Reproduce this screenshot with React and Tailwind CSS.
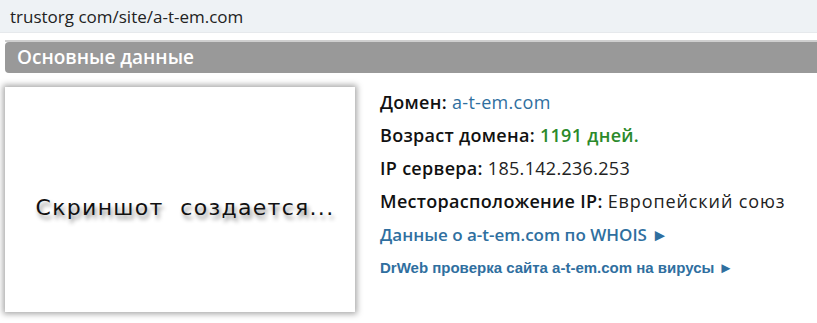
export default function App() {
  const rows = [
    { label: "Домен:", value: "a-t-em.com", cls: "text-[#2f6f9f] font-normal" },
    { label: "Возраст домена:", value: "1191 дней.", cls: "text-[#2b8a2b] font-semibold" },
    { label: "IP сервера:", value: "185.142.236.253", cls: "text-[#222] font-normal" },
    { label: "Месторасположение IP:", value: "Европейский союз", cls: "text-[#222] font-normal tracking-[0.9px]" },
  ];

  return (
    <div className="w-[817px] h-[323px] overflow-hidden bg-white font-['Open_Sans',sans-serif]">
      {/* адресная строка */}
      <div className="h-[33px] bg-[#eef2f5] border-b border-[#e6e9ec] pl-[10px] flex items-center">
        <span className="text-[17px] text-[#222] leading-none">trustorg com/site/a-t-em.com</span>
      </div>

      {/* заголовок блока */}
      <div className="mt-[7px] ml-[5px] border-t-2 border-[#cfcfcf]">
        <div className="h-[31px] bg-[#999999] rounded-l-[4px] pl-[12px] flex items-center">
          <h2 className="text-white font-semibold text-[19px] leading-none">Основные данные</h2>
        </div>
      </div>

      <div className="flex mt-[14px] ml-[5px]">
        {/* скриншот */}
        <div className="w-[350px] h-[225px] bg-white shadow-[0_0_6px_2px_rgba(0,0,0,0.35)] flex items-center justify-center">
          <span className="font-['DejaVu_Sans',sans-serif] text-[22px] text-[#111] tracking-[1.3px] [text-shadow:2px_4px_4px_rgba(0,0,0,0.45)] mt-[16px] ml-[10px]">
            Скриншот&nbsp;&nbsp;создается...
          </span>
        </div>

        {/* данные */}
        <div className="ml-[25px] -mt-[2px] flex flex-col">
          {rows.map((r) => (
            <div key={r.label} className="h-[33px] flex items-center text-[18px] tracking-[0.3px] leading-none">
              <span className="font-semibold text-[#111]">{r.label}</span>
              <span className={"ml-[5px] " + r.cls}>{r.value}</span>
            </div>
          ))}
          <a className="mt-[3px] h-[30px] flex items-center text-[17px] font-semibold text-[#2f6f9f]">
            Данные о a-t-em.com по WHOIS ►
          </a>
          <a className="mt-[3px] h-[30px] flex items-center font-['Liberation_Sans',sans-serif] font-bold text-[15px] text-[#2f6f9f]">
            DrWeb проверка сайта a-t-em.com на вирусы ►
          </a>
        </div>
      </div>
    </div>
  );
}
